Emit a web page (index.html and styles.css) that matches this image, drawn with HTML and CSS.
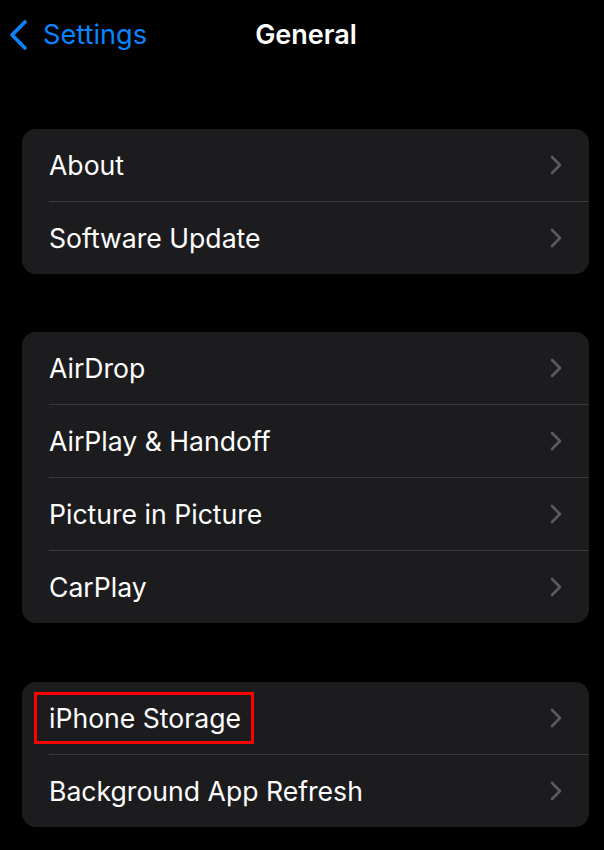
FILE: index.html
```html
<!DOCTYPE html>
<html>
<head>
<meta charset="utf-8">
<link rel="stylesheet" href="styles.css">
</head>
<body>
<div class="screen">
  <header class="nav">
    <div class="back">
      <svg class="back-icon" width="22" height="32" viewBox="0 0 22 32"><path d="M17 3 L4 16 L17 29" fill="none" stroke="#0a84ff" stroke-width="3.6" stroke-linecap="round" stroke-linejoin="round"/></svg>
      <span class="back-label">Settings</span>
    </div>
    <div class="title">General</div>
  </header>

  <section class="group">
    <div class="row"><span class="label">About</span><svg class="chev" width="12" height="20" viewBox="0 0 12 20"><path d="M2 2 L10 10 L2 18" fill="none" stroke="#5b5b5f" stroke-width="2.6" stroke-linecap="round" stroke-linejoin="round"/></svg></div>
    <div class="row"><span class="label">Software Update</span><svg class="chev" width="12" height="20" viewBox="0 0 12 20"><path d="M2 2 L10 10 L2 18" fill="none" stroke="#5b5b5f" stroke-width="2.6" stroke-linecap="round" stroke-linejoin="round"/></svg></div>
  </section>

  <section class="group">
    <div class="row"><span class="label">AirDrop</span><svg class="chev" width="12" height="20" viewBox="0 0 12 20"><path d="M2 2 L10 10 L2 18" fill="none" stroke="#5b5b5f" stroke-width="2.6" stroke-linecap="round" stroke-linejoin="round"/></svg></div>
    <div class="row"><span class="label">AirPlay &amp; Handoff</span><svg class="chev" width="12" height="20" viewBox="0 0 12 20"><path d="M2 2 L10 10 L2 18" fill="none" stroke="#5b5b5f" stroke-width="2.6" stroke-linecap="round" stroke-linejoin="round"/></svg></div>
    <div class="row"><span class="label">Picture in Picture</span><svg class="chev" width="12" height="20" viewBox="0 0 12 20"><path d="M2 2 L10 10 L2 18" fill="none" stroke="#5b5b5f" stroke-width="2.6" stroke-linecap="round" stroke-linejoin="round"/></svg></div>
    <div class="row"><span class="label">CarPlay</span><svg class="chev" width="12" height="20" viewBox="0 0 12 20"><path d="M2 2 L10 10 L2 18" fill="none" stroke="#5b5b5f" stroke-width="2.6" stroke-linecap="round" stroke-linejoin="round"/></svg></div>
  </section>

  <section class="group">
    <div class="row"><span class="label highlighted">iPhone Storage</span><svg class="chev" width="12" height="20" viewBox="0 0 12 20"><path d="M2 2 L10 10 L2 18" fill="none" stroke="#5b5b5f" stroke-width="2.6" stroke-linecap="round" stroke-linejoin="round"/></svg></div>
    <div class="row"><span class="label">Background App Refresh</span><svg class="chev" width="12" height="20" viewBox="0 0 12 20"><path d="M2 2 L10 10 L2 18" fill="none" stroke="#5b5b5f" stroke-width="2.6" stroke-linecap="round" stroke-linejoin="round"/></svg></div>
  </section>
</div>
</body>
</html>
```
FILE: styles.css
```css
* { box-sizing: border-box; }
html, body {
  margin: 0;
  padding: 0;
  background: #000;
}
body {
  font-family: "Inter", "Roboto", sans-serif;
  color: #fff;
  width: 604px;
  height: 850px;
  overflow: hidden;
}
.screen {
  padding: 0 15px 0 22px;
}
.nav {
  position: relative;
  height: 70px;
  display: flex;
  align-items: center;
  justify-content: center;
  margin-left: -22px;
  margin-right: -15px;
}
.back {
  position: absolute;
  left: 8px;
  top: 18px;
  display: flex;
  align-items: center;
  gap: 13px;
  color: #0a84ff;
}
.back-icon { display: block; }
.back-label {
  font-size: 27.2px;
}
.title {
  font-size: 27px;
  font-weight: 600;
  padding-left: 8px;
  margin-top: -1px;
}
.group {
  background: #1c1c1e;
  border-radius: 14px;
  margin-top: 59px;
  padding-left: 27px;
}
.group + .group { margin-top: 58px; }
.group:last-child { margin-top: 59px; }
.row {
  height: 72px;
  display: flex;
  align-items: center;
  justify-content: space-between;
  padding-right: 27px;
  border-top: 1px solid #38383a;
  box-sizing: content-box;
}
.row:first-child { border-top: none; }
.label {
  font-size: 26.6px;
  letter-spacing: 0;
}
.chev { display: block; }
.highlighted {
  outline: 3px solid #ff0000;
  outline-offset: 0;
  padding: 7px 10px 7px 12px;
  margin-left: -12px;
}
```
